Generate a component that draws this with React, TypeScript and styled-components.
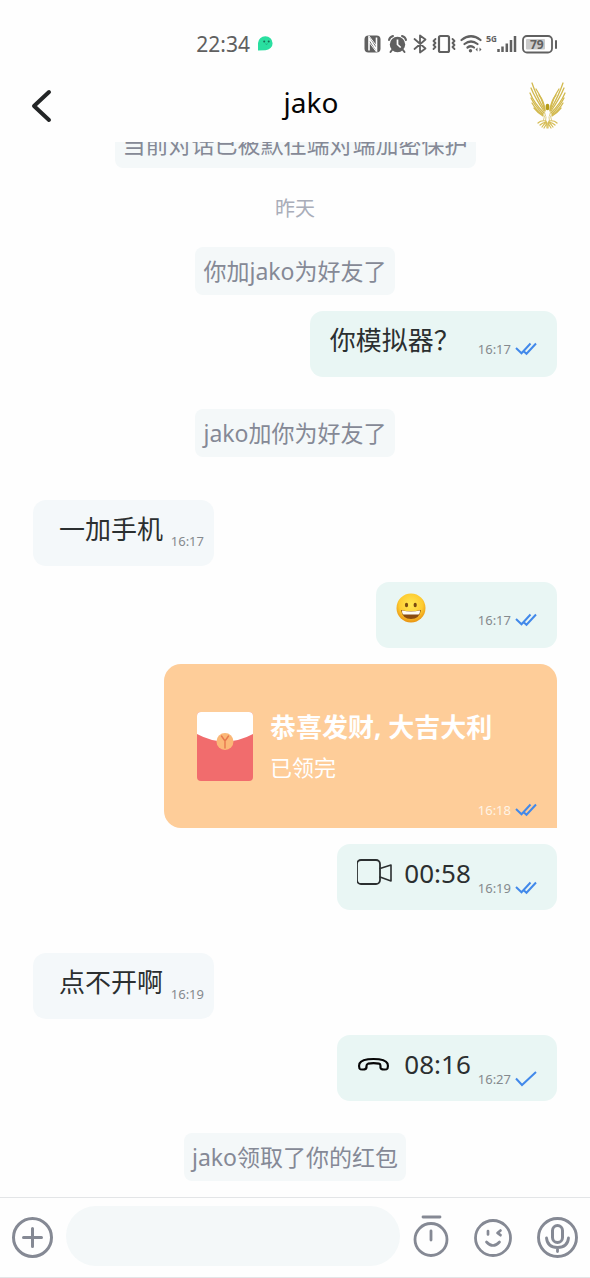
import React from 'react';
import styled, { createGlobalStyle } from 'styled-components';

const GlobalStyle = createGlobalStyle`
  *, *::before, *::after { box-sizing: border-box; }
  body {
    margin: 0;
    background: #fff;
    font-family: "Noto Sans", "Noto Sans CJK SC", sans-serif;
  }
  button { border: 0; padding: 0; background: none; color: inherit; font: inherit; cursor: pointer; }
  svg { display: block; flex: none; }
`;

const Screen = styled.div`
  display: flex;
  flex-direction: column;
  height: 100vh;
  overflow: hidden;
  background: #fefefe;
`;

const StatusBar = styled.div`
  display: flex;
  flex: none;
  align-items: center;
  justify-content: flex-end;
  gap: 91px;
  height: 76px;
  padding: 11px 33px 0 0;
  color: #606060;
`;

const Clock = styled.div`
  display: flex;
  align-items: center;
  gap: 8px;
  font-size: 21px;
  line-height: 28px;
`;

const StatusIcons = styled.div`
  display: flex;
  align-items: center;
`;

const Header = styled.header`
  display: flex;
  flex: none;
  align-items: center;
  height: 66px;
  padding: 0 22px 14px 31px;
`;

const BackButton = styled.button`
  width: 64px;
  padding-top: 8px;
`;

const Title = styled.h1`
  flex: 1;
  margin: 0;
  color: #050505;
  font-size: 28px;
  font-weight: 400;
  line-height: 36px;
  text-align: center;
`;

const Avatar = styled.button`
  width: 41px;
  padding-top: 8px;
`;

const Messages = styled.main`
  display: flex;
  flex: 1;
  flex-direction: column;
  justify-content: flex-end;
  gap: 16px;
  min-height: 0;
  padding: 0 33px 16px;
  overflow: hidden;
`;

const DateLabel = styled.time`
  flex: none;
  padding-top: 19px;
  color: #a9adb9;
  font-size: 20px;
  line-height: 12px;
  text-align: center;
`;

const SystemRow = styled.div`
  display: flex;
  flex: none;
  justify-content: center;
  padding-top: 16px;
`;

const Notice = styled.p`
  margin: 0;
  padding: 8px;
  border-radius: 8px;
  background: #f4f8f9;
  color: #858996;
  font-size: 23px;
  line-height: 32px;
  white-space: nowrap;
`;

const MessageRow = styled.div<{ $incoming?: boolean }>`
  display: flex;
  flex: none;
  justify-content: ${(p) => (p.$incoming ? 'flex-start' : 'flex-end')};
  padding-top: ${(p) => (p.$incoming ? 27 : 0)}px;
`;

const Bubble = styled.div<{ $incoming?: boolean; $gap?: number }>`
  display: flex;
  align-items: flex-start;
  justify-content: space-between;
  gap: ${(p) => p.$gap ?? 7}px;
  min-width: 181px;
  height: 66px;
  padding: ${(p) => (p.$incoming ? '0 10px 0 26px' : '0 20px')};
  border-radius: 13px;
  background: ${(p) => (p.$incoming ? '#f4f8fa' : '#e9f6f4')};
`;

const BubbleText = styled.span`
  display: flex;
  align-items: center;
  gap: 12px;
  height: 57px;
  color: #2b2f30;
  font-size: 26px;
  line-height: 32px;
  white-space: nowrap;
`;

const EmojiText = styled.span`
  padding: 11px 0;
`;

const Meta = styled.span<{ $top?: number; $light?: boolean }>`
  display: flex;
  align-items: center;
  gap: 4px;
  margin-top: ${(p) => p.$top ?? 0}px;
  color: ${(p) => (p.$light ? '#fff4e6' : '#858a8e')};
  font-size: 13px;
  line-height: 16px;
`;

const RedPacket = styled.button`
  display: flex;
  flex-direction: column;
  justify-content: space-between;
  width: 393px;
  height: 164px;
  padding: 43px 20px 10px 33px;
  border-radius: 17px 17px 0 17px;
  background: #fecd99;
  color: #fff;
  text-align: left;
`;

const PacketBody = styled.span`
  display: flex;
  align-items: center;
  gap: 17px;
`;

const PacketText = styled.span`
  display: flex;
  flex-direction: column;
`;

const PacketTitle = styled.strong`
  font-size: 26px;
  font-weight: 700;
  line-height: 40px;
`;

const PacketStatus = styled.span`
  font-size: 22px;
  line-height: 40px;
`;

const PacketMeta = styled.span`
  display: flex;
  justify-content: flex-end;
`;

const Composer = styled.form`
  display: flex;
  flex: none;
  align-items: center;
  height: 81px;
  padding: 0 12px;
  border-top: 1px solid #e3e5e7;
  border-bottom: 1px solid #e3e5e7;
  color: #858994;
`;

const TextBox = styled.input`
  flex: 1;
  align-self: flex-start;
  min-width: 0;
  height: 60px;
  margin: 8px 13px 0;
  padding: 0 26px;
  border: 0;
  border-radius: 30px;
  outline: 0;
  background: #f4f8f9;
  color: #2b2f30;
  font: inherit;
  font-size: 26px;
`;

const ComposerTools = styled.div`
  display: flex;
  align-items: center;
  gap: 25px;
`;

const line = { fill: 'none', stroke: 'currentColor', strokeLinecap: 'round', strokeLinejoin: 'round' } as const;

const Mascot = () => (
  <svg width="15" height="15" viewBox="0 0 15 15" aria-hidden="true">
    <path d="M0 14.5V7A7.3 7 0 1 1 7.5 14.2Z" fill="#2adfa0" />
    <circle cx="6.2" cy="5.5" r="1" fill="#176b52" />
    <circle cx="10.7" cy="5.5" r="1" fill="#176b52" />
    <path d="M7.5 7.8q1 1 2 0" stroke="#1ba77a" fill="none" />
  </svg>
);

const StatusGlyphs = () => (
  <svg width="193" height="24" viewBox="0 0 193 24" role="img" aria-label="NFC, alarm, Bluetooth, vibrate, Wi-Fi, signal">
    {/* NFC */}
    <rect x="0.5" y="3.5" width="16" height="17" rx="4" fill="currentColor" />
    <path d="M5 18.5V6L12.5 18V5.5" fill="none" stroke="#fff" strokeWidth="1.6" />
    <path d="M5 4L12.5 14M5 10l7.5 10" fill="none" stroke="#fff" strokeWidth="1" />
    {/* alarm */}
    <circle cx="33.5" cy="12.5" r="7.7" fill="currentColor" />
    <path d="M25 8q.7-3 4-4M38 4q3.5 1 4 4M28 18l-1.500 2M39 18l1.500 2" {...line} strokeWidth="2" />
    <path d="M33.5 7.5v5l3.2 3" fill="none" stroke="#fff" strokeWidth="1.7" />
    {/* Bluetooth */}
    <path d="M50.5 7l11 9.5-5.5 4V3.500l5.5 4-11 9.500" {...line} strokeWidth="1.8" />
    {/* vibrate */}
    <rect x="75" y="4" width="10" height="16" rx="1.5" {...line} strokeWidth="2.2" />
    <path d="M71.5 7l-2 2 2 2-2 2 2 2-2 2M88.500 7l2 2-2 2 2 2-2 2 2 2" {...line} strokeWidth="1.8" />
    {/* Wi-Fi */}
    <path d="M97.5 8q9.500-7.500 19 0M100.500 12q6.500-5 13 0M103.500 15.500q3.500-2.500 6.500 0" {...line} strokeWidth="2.2" />
    <circle cx="106.5" cy="18.7" r="1.7" fill="currentColor" />
    <path d="M113.5 15.500l-2 2 2 2zM115.500 15.500l2 2-2 2z" fill="currentColor" />
    {/* cellular */}
    <text x="122" y="10" fontSize="9" fontWeight="700" fill="currentColor">5</text>
    <text x="127" y="10" fontSize="8" fontWeight="700" fill="currentColor">G</text>
    <path d="M134.500 17v3M138.500 14.500v5.500M142.800 11.500v8.500M147 8v12M151 4v16" stroke="currentColor" strokeWidth="2.500" fill="none" />
    {/* battery */}
    <rect x="159" y="4" width="29" height="16.500" rx="4" {...line} strokeWidth="1.8" />
    <rect x="162" y="7" width="19" height="10.500" rx="1" fill="#cacaca" />
    <text x="166" y="16.500" fontSize="12" fontWeight="700" fill="currentColor">79</text>
    <path d="M192 9v7" {...line} strokeWidth="2" />
  </svg>
);

const BackIcon = () => (
  <svg width="21" height="34" viewBox="0 0 21 34" aria-hidden="true">
    <path d="M18 3L3 17l15 14" {...line} stroke="#232526" strokeWidth="4" />
  </svg>
);

/* Each feather is a slim curved stroke from the outer tip towards the shoulder. */
const FEATHERS = [
  'M5 2Q9 14 17 28',
  'M4 7Q8 17 17 30',
  'M3 12Q7 22 17 32',
  'M4 17Q8 25 16 33',
  'M5 22Q9 29 16 34',
  'M7 27Q11 32 16 35',
  'M9 8Q15 17 18 30',
  'M12 14Q17 20 18 29',
];

const EagleWing = () => (
  <g fill="none" stroke="#d2b94e" strokeLinecap="round">
    {FEATHERS.map((d) => <path key={d} d={d} strokeWidth="1.3" />)}
    <path d="M17.500 31l1 4M17.500 35l-1 4M19 36l-.5 4" stroke="#e0cf86" />
    <path d="M19 40Q14 39 11 42M19 41Q15 42 13 44M19.500 41Q17 43 15 46M20 42v5M20 42l-3 5" stroke="#d6bd57" strokeWidth="1.2" />
  </g>
);

const EagleLogo = () => (
  <svg width="41" height="50" viewBox="0 0 41 50" aria-hidden="true">
    <EagleWing />
    <g transform="translate(41 0) scale(-1 1)"><EagleWing /></g>
    <ellipse cx="20.5" cy="26" rx="1.9" ry="3.2" fill="#b49b18" />
  </svg>
);

const DoubleCheck = () => (
  <svg width="22" height="14" viewBox="0 0 22 14" role="img" aria-label="已读">
    <path d="M1 6l5.500 5.300L15.500 1.500M9 9.500l2.500 2.300L21 1.500" fill="none" stroke="#4289ea" strokeWidth="2" />
  </svg>
);

const SingleCheck = () => (
  <svg width="22" height="16" viewBox="0 0 22 16" role="img" aria-label="已送达">
    <path d="M1 7.500l6 6.500L21 1" fill="none" stroke="#4289ea" strokeWidth="2" />
  </svg>
);

const Grin = () => (
  <svg width="30" height="30" viewBox="0 0 30 30" role="img" aria-label="😀">
    <defs>
      <radialGradient id="grin-face" cx="50%" cy="38%" r="62%">
        <stop offset="0" stopColor="#ffe852" />
        <stop offset="0.65" stopColor="#fdcb31" />
        <stop offset="1" stopColor="#e99210" />
      </radialGradient>
    </defs>
    <circle cx="15" cy="15" r="14.5" fill="url(#grin-face)" />
    <ellipse cx="10.5" cy="12" rx="1.6" ry="2.2" fill="#7a4a10" />
    <ellipse cx="19.2" cy="12" rx="1.6" ry="2.2" fill="#7a4a10" />
    <path d="M5 17Q15 19.500 25 17Q23.500 26 15 26Q6.500 26 5 17Z" fill="#8a4c10" />
    <path d="M6 17.500Q15 19.700 24 17.500Q24 21 22.500 21.500H7.500Q6 21 6 17.500Z" fill="#fffdf5" />
  </svg>
);

const Envelope = () => (
  <svg width="56" height="70" viewBox="0 0 56 70" aria-hidden="true">
    <rect width="56" height="69" rx="4" fill="#f16c6d" />
    <path d="M0 22V4Q0 0 4 0H52Q56 0 56 4V22Q28 37 0 22Z" fill="#fff" />
    <circle cx="28" cy="29.5" r="8.5" fill="#fbb878" />
    <path d="M24.500 24l3.500 5 3.500-5M28 29v7" {...line} stroke="#e7784f" strokeWidth="1.4" />
  </svg>
);

const VideoIcon = () => (
  <svg width="35" height="28" viewBox="0 0 35 28" aria-hidden="true">
    <rect x="0" y="1" width="23" height="24" rx="4" {...line} strokeWidth="1.8" overflow="visible" />
    <path d="M23 9.500l11-3.500v16l-11-4" {...line} strokeWidth="1.6" />
  </svg>
);

const PhoneIcon = () => (
  <svg width="35" height="16" viewBox="0 0 35 16" aria-hidden="true">
    <path
      d="M2.500 12.500q-1-2 0-5Q4.500 3 16.500 3t14 4.500q1 3 0 5-1 1.500-5 .8-2.500-.3-2-3.300 0-2-1.500-2.300-5.500-1-11 0-1.500.4-1.500 2.300.3 3-2 3.300Q3.500 14 2.500 12.500Z"
      {...line} stroke="#060606" strokeWidth="2.2"
    />
  </svg>
);

const PlusIcon = () => (
  <svg width="41" height="41" viewBox="0 0 41 41" aria-hidden="true">
    <circle cx="20.5" cy="20.5" r="19" {...line} strokeWidth="3" />
    <path d="M20.5 11.500v18M11.500 20.500h18" {...line} strokeWidth="3" />
  </svg>
);

const TimerIcon = () => (
  <svg width="36" height="46" viewBox="0 0 36 46" aria-hidden="true">
    <circle cx="18" cy="24.5" r="16" {...line} strokeWidth="2.8" />
    <path d="M10 2h17M18 16v9" {...line} strokeWidth="2.8" />
  </svg>
);

const SmileIcon = () => (
  <svg width="38" height="38" viewBox="0 0 38 38" aria-hidden="true">
    <circle cx="19" cy="19" r="17.5" {...line} strokeWidth="2.8" />
    <path d="M14 12v3.500M26.500 11.500l-3 2.500 3 2.200M12.500 23q6.500 7 13 0" {...line} strokeWidth="2.7" />
  </svg>
);

const MicIcon = () => (
  <svg width="41" height="41" viewBox="0 0 41 41" aria-hidden="true">
    <circle cx="20.5" cy="20.5" r="19" {...line} strokeWidth="2.9" />
    <rect x="15.5" y="8.5" width="10" height="17" rx="5" {...line} strokeWidth="3" />
    <path d="M9.500 21q1 9.500 11 9.500T31.500 21M20.500 30.500v4" {...line} strokeWidth="2.8" />
  </svg>
);

interface MessageProps {
  time: string;
  metaTop: number;
  incoming?: boolean;
  gap?: number;
  single?: boolean;
  emoji?: boolean;
  children: React.ReactNode;
}

const Message = ({ time, metaTop, incoming, gap, single, emoji, children }: MessageProps) => (
  <MessageRow $incoming={incoming}>
    <Bubble $incoming={incoming} $gap={gap}>
      {emoji ? <EmojiText>{children}</EmojiText> : <BubbleText>{children}</BubbleText>}
      <Meta $top={metaTop}>
        <time>{time}</time>
        {!incoming && (single ? <SingleCheck /> : <DoubleCheck />)}
      </Meta>
    </Bubble>
  </MessageRow>
);

const SystemNotice = ({ children }: { children: React.ReactNode }) => (
  <SystemRow><Notice>{children}</Notice></SystemRow>
);

export default function App() {
  return (
    <Screen>
      <GlobalStyle />
      <StatusBar>
        <Clock><time>22:34</time><Mascot /></Clock>
        <StatusIcons><StatusGlyphs /></StatusIcons>
      </StatusBar>
      <Header>
        <BackButton type="button" aria-label="返回"><BackIcon /></BackButton>
        <Title>jako</Title>
        <Avatar type="button" aria-label="jako 的资料"><EagleLogo /></Avatar>
      </Header>
      <Messages>
        <SystemNotice>当前对话已被默往端对端加密保护</SystemNotice>
        <DateLabel>昨天</DateLabel>
        <SystemNotice>你加jako为好友了</SystemNotice>
        <Message time="16:17" metaTop={30} gap={18}>你模拟器？</Message>
        <SystemNotice>jako加你为好友了</SystemNotice>
        <Message incoming time="16:17" metaTop={33}>一加手机</Message>
        <Message emoji time="16:17" metaTop={30}><Grin /></Message>
        <MessageRow>
          <RedPacket type="button">
            <PacketBody>
              <Envelope />
              <PacketText>
                <PacketTitle>恭喜发财, 大吉大利</PacketTitle>
                <PacketStatus>已领完</PacketStatus>
              </PacketText>
            </PacketBody>
            <PacketMeta>
              <Meta $light><time>16:18</time><DoubleCheck /></Meta>
            </PacketMeta>
          </RedPacket>
        </MessageRow>
        <Message time="16:19" metaTop={36}><VideoIcon />00:58</Message>
        <Message incoming time="16:19" metaTop={33}>点不开啊</Message>
        <Message single time="16:27" metaTop={36}><PhoneIcon />08:16</Message>
        <SystemNotice>jako领取了你的红包</SystemNotice>
      </Messages>
      <Composer onSubmit={(e) => e.preventDefault()}>
        <button type="button" aria-label="更多"><PlusIcon /></button>
        <TextBox type="text" aria-label="输入消息" />
        <ComposerTools>
          <button type="button" aria-label="定时消息"><TimerIcon /></button>
          <button type="button" aria-label="表情"><SmileIcon /></button>
          <button type="button" aria-label="语音"><MicIcon /></button>
        </ComposerTools>
      </Composer>
    </Screen>
  );
}
